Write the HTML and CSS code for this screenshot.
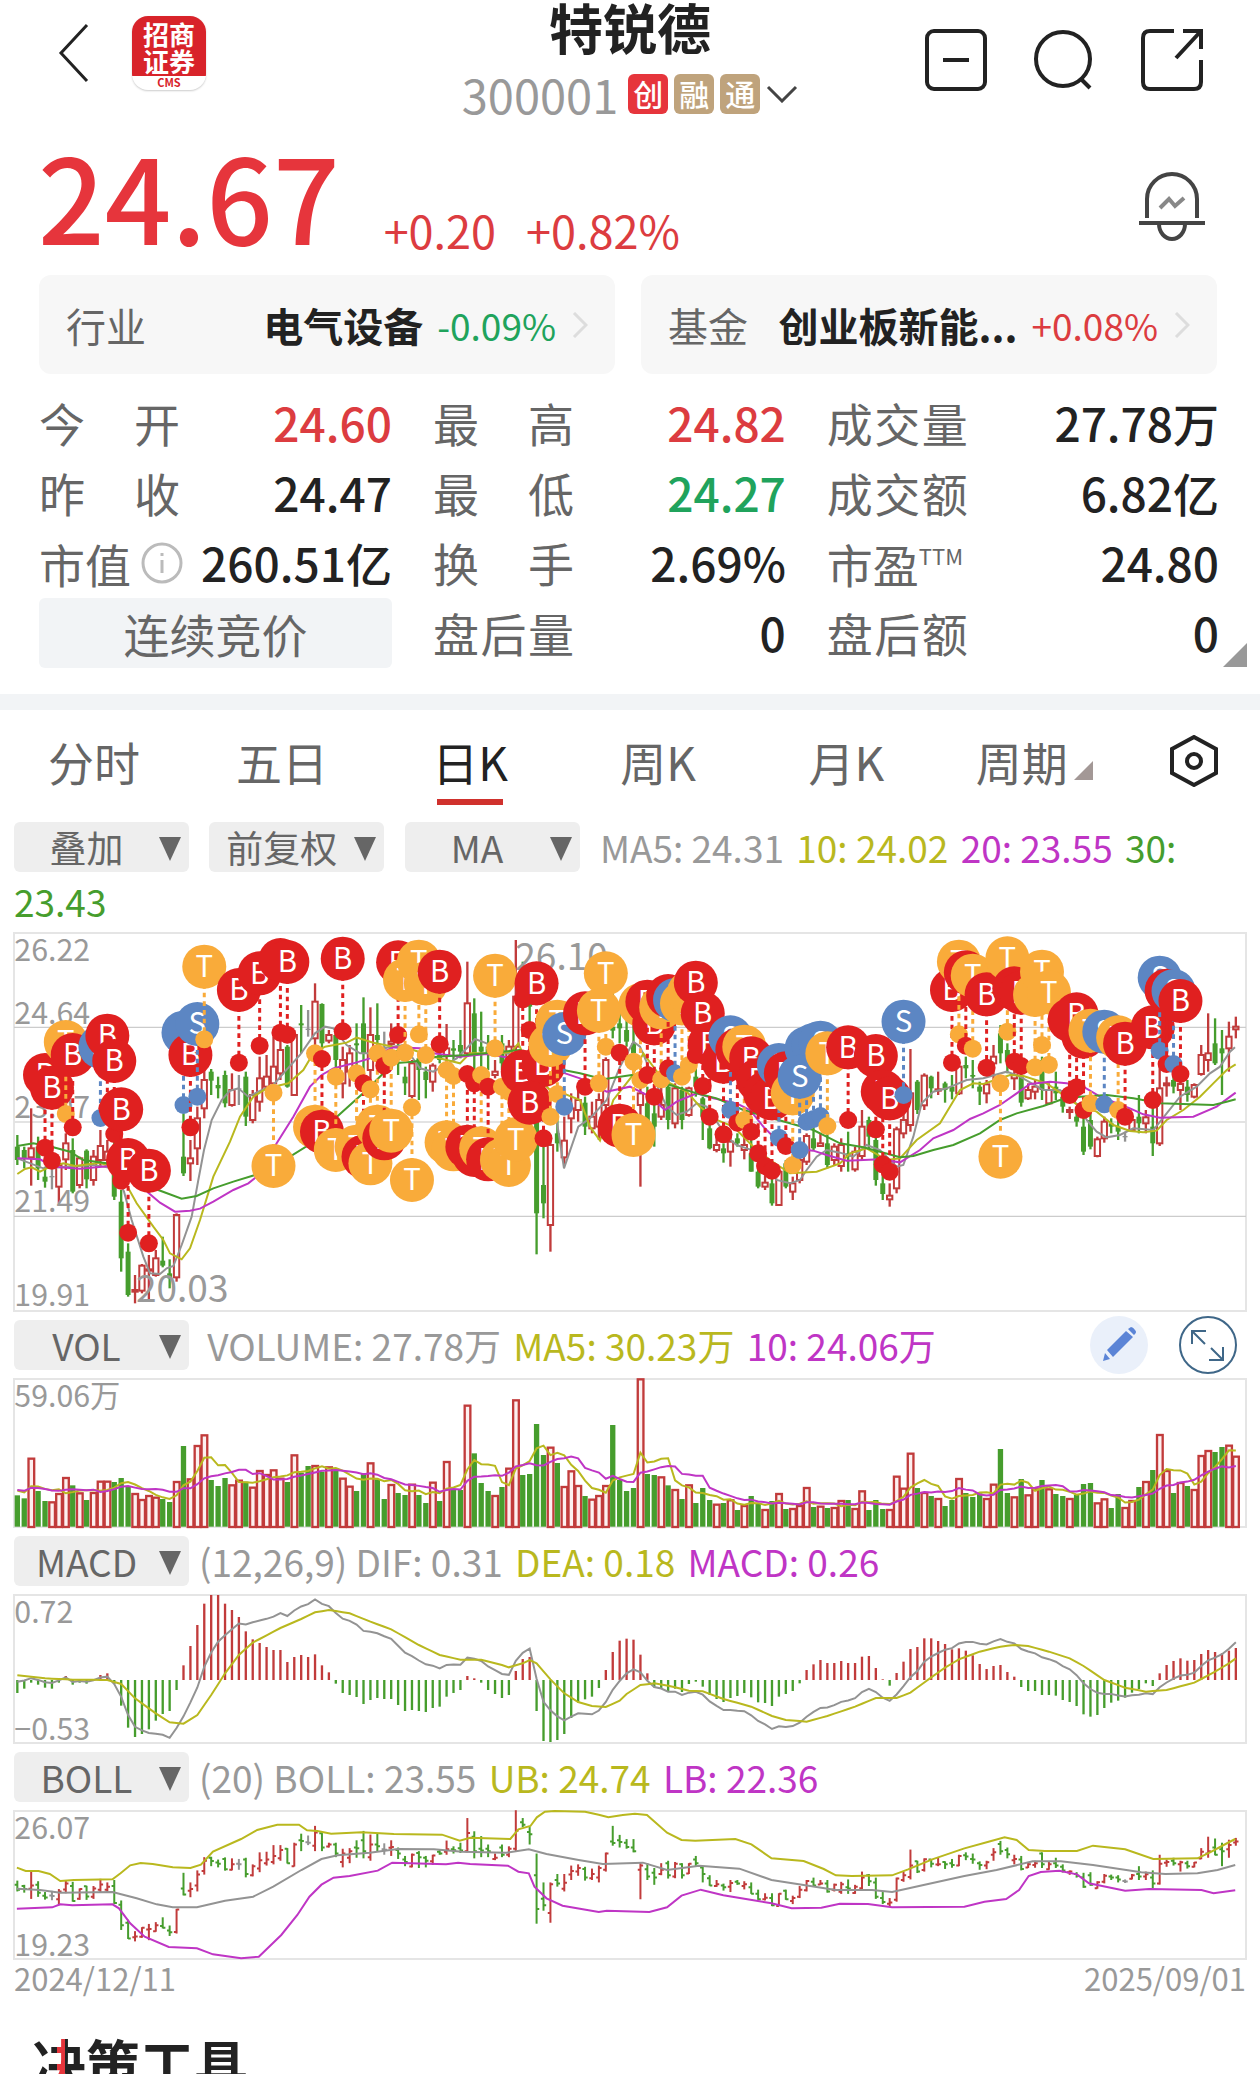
FILE: index.html
```html
<!DOCTYPE html>
<html lang="zh-CN">
<head>
    <meta charset="UTF-8">
    <meta name="viewport" content="width=device-width, initial-scale=1.0">
    <title>特锐德 300001</title>
    <link rel="stylesheet" href="styles.css">
</head>
<body>
    <header class="topbar">
        <div class="topbar-left">
            <a class="back" href="#" aria-label="返回">
                <svg width="32" height="60" viewBox="0 0 32 60"><path d="M29 2L3 30L29 58"/></svg>
            </a>
            <div class="logo">
                <div class="logo-name">招商<br>证券</div>
                <div class="logo-code">CMS</div>
            </div>
        </div>
        <div class="stock">
            <h1>特锐德</h1>
            <div class="stock-code">
                <span>300001</span>
                <span class="badge badge-red">创</span>
                <span class="badge">融</span>
                <span class="badge">通</span>
                <svg class="stock-arrow" width="32" height="18" viewBox="0 0 32 18"><path d="M2 2L16 16L30 2"/></svg>
            </div>
        </div>
        <div class="topbar-right">
            <button aria-label="删自选">
                <svg width="62" height="62" viewBox="0 0 62 62"><rect x="2" y="2" width="58" height="58" rx="7"/><path d="M18 31H44"/></svg>
            </button>
            <button aria-label="搜索">
                <svg width="62" height="62" viewBox="0 0 62 62"><circle cx="30" cy="30" r="27"/><path d="M48 50L57 59"/></svg>
            </button>
            <button aria-label="分享">
                <svg width="62" height="62" viewBox="0 0 62 62"><path d="M33 2H9Q2 2 2 9V53Q2 60 9 60H53Q60 60 60 53V31M42 2H60V20M60 2L35 29"/></svg>
            </button>
        </div>
    </header>

    <section class="price">
        <strong class="price-now">24.67</strong>
        <span class="price-diff">+0.20</span>
        <span class="price-diff">+0.82%</span>
        <button class="bell" aria-label="提醒">
            <svg width="68" height="70" viewBox="0 0 68 70">
                <path d="M9 46V27A25 25 0 0 1 59 27V46M1 51H67M21 52A13 15 0 0 0 47 52"/>
                <path class="bell-wave" d="M22 36L31 27L37 34L46 26"/>
            </svg>
        </button>
    </section>

    <section class="related">
        <a class="related-card" href="#">
            <span class="related-kind">行业</span>
            <b>电气设备</b>
            <span class="down">-0.09%</span>
            <svg width="16" height="26" viewBox="0 0 16 26"><path d="M2 1L14 13L2 25"/></svg>
        </a>
        <a class="related-card" href="#">
            <span class="related-kind">基金</span>
            <b>创业板新能...</b>
            <span class="up">+0.08%</span>
            <svg width="16" height="26" viewBox="0 0 16 26"><path d="M2 1L14 13L2 25"/></svg>
        </a>
    </section>

    <section class="quotes">
        <div class="quote"><span class="label">今开</span><span class="up">24.60</span></div>
        <div class="quote"><span class="label">最高</span><span class="up">24.82</span></div>
        <div class="quote"><span class="label">成交量</span><span>27.78万</span></div>
        <div class="quote"><span class="label">昨收</span><span>24.47</span></div>
        <div class="quote"><span class="label">最低</span><span class="down">24.27</span></div>
        <div class="quote"><span class="label">成交额</span><span>6.82亿</span></div>
        <div class="quote">
            <span class="label-short">市值<svg class="info" width="42" height="42" viewBox="0 0 42 42"><circle cx="21" cy="21" r="19"/><path d="M21 18V31M21 11V14"/></svg></span>
            <span>260.51亿</span>
        </div>
        <div class="quote"><span class="label">换手</span><span>2.69%</span></div>
        <div class="quote"><span class="label-short">市盈<sup>TTM</sup></span><span>24.80</span></div>
        <button class="phase">连续竞价</button>
        <div class="quote"><span class="label">盘后量</span><span>0</span></div>
        <div class="quote"><span class="label">盘后额</span><span>0</span></div>
        <i class="quotes-more"></i>
    </section>

    <nav class="tabs">
        <button>分时</button>
        <button>五日</button>
        <button class="active">日K</button>
        <button>周K</button>
        <button>月K</button>
        <button>周期<i class="corner"></i></button>
        <button aria-label="设置">
            <svg width="48" height="52" viewBox="0 0 48 52"><path d="M24 2L46 14V38L24 50L2 38V14Z"/><circle cx="24" cy="26" r="7"/></svg>
        </button>
    </nav>

    <main class="charts">
        <div class="legend legend-wrap">
            <span class="pick"><select aria-label="叠加"><option>叠加</option></select></span>
            <span class="pick"><select aria-label="复权"><option>前复权</option></select></span>
            <span class="pick"><select aria-label="主图指标"><option>MA</option></select></span>
            <span class="c-gray">MA5: 24.31</span>
            <span class="c-yellow">10: 24.02</span>
            <span class="c-purple">20: 23.55</span>
            <span class="c-green">30: 23.43</span>
        </div>
        <svg id="kline" class="panel" viewBox="42 39 3696 1134"></svg>

        <div class="legend">
            <span class="pick"><select aria-label="副图一"><option>VOL</option></select></span>
            <p>
                <span class="c-gray">&nbsp;VOLUME: 27.78万</span>
                <span class="c-yellow">MA5: 30.23万</span>
                <span class="c-purple">10: 24.06万</span>
            </p>
            <div class="chart-btns">
                <button class="draw" aria-label="画线">
                    <svg width="58" height="58" viewBox="0 0 58 58"><path d="M13 45L15 37L20 43ZM17 34L36 15L43 21L23 41ZM38 13L41 11Q43 11 45 14Q47 16 45 18L44 19Z"/></svg>
                </button>
                <button class="full" aria-label="全屏">
                    <svg width="58" height="58" viewBox="0 0 58 58"><circle cx="29" cy="29" r="28"/><path d="M13 28V15H27M14 16L26 28M44 31V44H30M43 43L32 32"/></svg>
                </button>
            </div>
        </div>
        <svg id="vol" class="panel" viewBox="42 207 3696 444"></svg>

        <div class="legend">
            <span class="pick"><select aria-label="副图二"><option>MACD</option></select></span>
            <p>
                <span class="c-gray">(12,26,9) DIF: 0.31</span>
                <span class="c-yellow">DEA: 0.18</span>
                <span class="c-purple">MACD: 0.26</span>
            </p>
        </div>
        <svg id="macd" class="panel" viewBox="42 195 3696 444"></svg>

        <div class="legend">
            <span class="pick"><select aria-label="副图三"><option>BOLL</option></select></span>
            <p>
                <span class="c-gray">(20) BOLL: 23.55</span>
                <span class="c-yellow">UB: 24.74</span>
                <span class="c-purple">LB: 22.36</span>
            </p>
        </div>
        <svg id="boll" class="panel" viewBox="42 63 3696 444"></svg>

        <div class="dates"><span>2024/12/11</span><span>2025/09/01</span></div>
    </main>

    <section class="tools">
        <h2>决策工具</h2>
    </section>

    <script src="charts.js"></script>
</body>
</html>
```
FILE: styles.css
```css
* {
    box-sizing: border-box;
}
body {
    margin: 0;
    background: #fff;
    color: #222;
    font-family: "Noto Sans CJK SC", sans-serif;
}
h1, h2, p {
    margin: 0;
}
button {
    border: 0;
    padding: 0;
    background: none;
    font: inherit;
    color: inherit;
}
a {
    color: inherit;
    text-decoration: none;
}
svg {
    display: block;
    fill: none;
    stroke: #222;
    stroke-width: 4;
}
.up {
    color: #dc3c40;
}
.down {
    color: #20a35c;
}

/* top bar */
.topbar {
    display: grid;
    grid-template-columns: 1fr auto 1fr;
    height: 128px;
}
.topbar-left {
    display: flex;
    align-items: center;
    gap: 42px;
    height: 106px;
    padding-left: 58px;
}
.back svg {
    stroke-width: 3;
}
.logo {
    width: 74px;
    height: 74px;
    border-radius: 16px;
    overflow: hidden;
    background: #fff;
    box-shadow: 0 1px 2px #ccc;
    text-align: center;
    color: #d8232a;
}
.logo-name {
    height: 60px;
    padding-top: 4px;
    background: #d8232a;
    color: #fff;
    font-size: 26px;
    line-height: 27px;
    font-weight: bold;
}
.logo-code {
    font-size: 11px;
    line-height: 13px;
    font-weight: bold;
}
.stock {
    text-align: center;
}
.stock h1 {
    font-size: 54px;
    line-height: 54px;
}
.stock-code {
    display: flex;
    align-items: center;
    justify-content: center;
    gap: 6px;
    height: 80px;
    font-size: 47px;
    line-height: 74px;
    color: #999;
}
.badge {
    width: 40px;
    height: 40px;
    border-radius: 6px;
    background: #bfa37c;
    color: #fff;
    font-size: 30px;
    line-height: 38px;
    font-weight: 500;
}
.badge-red {
    background: #e6353c;
    margin-left: 4px;
}
.stock-arrow {
    stroke: #444;
    stroke-width: 3;
}
.topbar-right {
    display: flex;
    justify-content: flex-end;
    gap: 46px;
    padding: 29px 57px 0 0;
}
.topbar-right button {
    height: 62px;
}

/* price */
.price {
    display: flex;
    align-items: flex-end;
    gap: 30px;
    padding: 0 54px 15px 38px;
}
.price-now {
    margin-right: 14px;
    font-size: 117px;
    line-height: 132px;
    font-weight: 500;
    color: #e6353c;
}
.price-diff {
    font-size: 45px;
    line-height: 60px;
    color: #dc3c40;
}
.bell {
    margin: 0 0 18px auto;
}
.bell svg {
    stroke: #444;
}
.bell .bell-wave {
    stroke: #888;
}

.related {
    display: grid;
    grid-template-columns: 1fr 1fr;
    gap: 26px;
    padding: 0 43px 14px 39px;
}
.related-card {
    display: flex;
    align-items: center;
    height: 99px;
    padding: 0 27px;
    border-radius: 12px;
    background: #f7f7f7;
    font-size: 40px;
    white-space: nowrap;
}
.related-kind {
    margin-right: auto;
    color: #666;
}
.related-card .up,
.related-card .down {
    margin: 0 16px 0 14px;
    font-size: 37px;
}
.related-card svg {
    stroke: #ddd;
    stroke-width: 3;
}

/* quote table */
.quotes {
    position: relative;
    display: grid;
    grid-template-columns: 9fr 9fr 10fr;
    grid-auto-rows: 70px;
    column-gap: 41px;
    padding: 0 41px 26px 39px;
    border-bottom: 16px solid #f2f4f6;
    font-size: 46px;
    line-height: 68px;
}
.quote {
    display: flex;
    justify-content: space-between;
    white-space: nowrap;
    font-weight: 500;
}
.label {
    width: 141px;
    text-align-last: justify;
    color: #666;
    font-weight: 400;
}
.label-short {
    display: flex;
    align-items: center;
    color: #666;
    font-weight: 400;
}
.label-short sup {
    align-self: flex-start;
    font-size: 22px;
    line-height: 54px;
}
.info {
    margin-left: 10px;
    stroke: #bbb;
    stroke-width: 3;
}
.phase {
    border-radius: 6px;
    background: #f2f4f6;
    color: #666;
}
.quotes-more {
    position: absolute;
    right: 13px;
    bottom: 27px;
    border-left: 24px solid transparent;
    border-bottom: 24px solid #999;
}

/* period tabs */
.tabs {
    display: grid;
    grid-template-columns: repeat(6, 10fr) 7fr;
    height: 95px;
    font-size: 46px;
    color: #666;
}
.tabs button {
    position: relative;
    display: flex;
    justify-content: center;
    align-items: center;
    height: 102px;
}
.tabs .active {
    color: #222;
}
.tabs .active::after {
    content: "";
    position: absolute;
    bottom: 7px;
    width: 66px;
    height: 6px;
    background: #d0312d;
}
.corner {
    margin: 18px 0 0 6px;
    border-left: 19px solid transparent;
    border-bottom: 19px solid #a39896;
}

/* charts */
.charts {
    padding: 15px 14px 0;
}
.legend {
    display: flex;
    align-items: center;
    gap: 10px;
    height: 68px;
    font-size: 37px;
    line-height: 50px;
    white-space: nowrap;
}
.legend-wrap {
    display: block;
    height: auto;
    padding-bottom: 5px;
    line-height: 54px;
    white-space: normal;
}
.legend p span,
.legend-wrap > span {
    margin-right: 4px;
}
.pick {
    position: relative;
    display: inline-block;
    width: 175px;
    height: 50px;
    vertical-align: top;
}
.legend-wrap > .pick {
    margin: 2px 12px 2px 0;
}
.pick::after {
    content: "";
    position: absolute;
    right: 8px;
    top: 15px;
    border: 11px solid transparent;
    border-top: 24px solid #666;
    border-bottom: 0;
    pointer-events: none;
}
.pick select {
    appearance: none;
    display: block;
    width: 100%;
    height: 50px;
    padding: 0 30px 0 0;
    border: 0;
    border-radius: 6px;
    background: #eee;
    color: #666;
    font: inherit;
    line-height: 50px;
    text-align: center;
    text-align-last: center;
}
.c-gray {
    color: #999;
}
.c-yellow {
    color: #b9b81e;
}
.c-purple {
    color: #bf35c5;
}
.c-green {
    color: #469d2d;
}
.chart-btns {
    display: flex;
    gap: 31px;
    margin: 0 9px 0 auto;
}
.draw {
    border-radius: 50%;
    background: #eaf0fa;
}
.draw svg {
    fill: #5b84d6;
    stroke: none;
}
.full svg {
    stroke: #3f6788;
    stroke-width: 2;
}
.panel {
    width: 100%;
    height: auto;
    overflow: visible;
}
.panel text {
    stroke: none;
    fill: #999;
    font-size: 91px;
}
.panel .peak {
    font-size: 111px;
}
.panel .mark {
    fill: #fff;
    font-size: 88px;
    text-anchor: middle;
}
.frame {
    stroke: #e5e5e5;
    stroke-width: 6;
}
.dates {
    display: flex;
    justify-content: space-between;
    font-size: 31px;
    line-height: 38px;
    color: #999;
}

.tools {
    height: 77px;
    padding: 33px 32px 0;
    overflow: hidden;
}
.tools h2 {
    font-size: 54px;
    line-height: 66px;
    color: transparent;
    background: linear-gradient(90deg, #222 25px, #e6353c 25px, #e6353c 33px, #222 33px);
    -webkit-background-clip: text;
    background-clip: text;
}
```
FILE: charts.js
```js
var RED = "#c13b3b", GREEN = "#469d2d", GRAY = "#939393", YELLOW = "#b9b81e", PURPLE = "#bf35c5"
var MARK = {B: "#e02020", T: "#f9ab3a", S: "#5c86c3"}
var COLORS = {r: RED, g: GREEN, x: GRAY}

// one entry per day: colour, high, body top, body bottom, low
var candles = `g 645 680 720 735,g 680 690 715 745,r 565 685 712 797,g 650 680 745 780,g 740 770 785 803,x 730 768 772 808,r 715 735 800 850,r 640 670 718 750,g 655 690 815 820,r 710 715 795 805
g 688 692 778 805,r 690 710 780 797,r 630 678 720 740,r 660 695 720 740,g 640 690 830 840,g 810 845 1015 1055,g 970 995 1125 1130,r 1065 1110 1115 1150,r 1032 1037 1112 1120,r 1005 1048 1052 1140
r 990 1015 1065 1070,g 950 1022 1037 1042,g 1018 1060 1075 1105,r 880 885 1072 1085,g 580 710 760 768,r 660 715 730 783,r 560 595 685 735,r 450 480 565 595,g 447 455 482 525,g 470 495 505 535
g 452 465 550 562,r 460 510 555 560,x 465 505 508 555,g 455 470 590 618,r 510 525 600 610,r 410 475 545 575,r 405 470 500 520,r 350 440 490 510,r 350 390 460 480,g 375 380 500 503
r 330 345 525 528,g 255 310 316 400,x 270 326 330 350,r 190 245 355 400,g 250 252 370 400,r 330 345 362 370,g 330 345 420 450,r 380 420 490 535,r 375 400 455 500,g 310 370 376 455
g 232 310 400 460,r 262 345 450 480,g 250 345 360 400,x 335 385 388 430,r 310 365 372 440,g 370 390 420 465,g 440 470 490 525,r 420 430 528 535,g 400 415 450 540,g 440 455 480 535
r 430 437 485 515,g 390 405 420 430,r 312 385 405 430,g 360 385 392 420,g 330 375 395 415,r 125 250 400 410,g 235 280 400 460,g 275 380 395 450,g 345 380 400 450,r 420 455 465 475
g 345 370 430 450,r 360 380 430 450,r 60 230 380 400,g 125 160 180 200,g 200 240 260 345,g 420 600 880 1003,g 660 795 850 895,r 660 675 915 995,g 590 640 670 695,r 590 662 712 735
r 520 565 595 640,r 510 540 570 605,g 530 548 620 645,r 545 590 625 640,r 520 540 620 660,r 412 420 555 570,g 190 320 332 355,g 265 310 325 370,g 300 330 365 380,g 300 370 400 410
r 500 520 555 800,g 500 550 610 640,g 540 580 620 680,r 500 555 590 600,g 480 500 600 628,r 490 505 610 625,g 500 510 600 628,r 500 505 585 590,g 440 470 500 530,g 530 535 590 660
g 600 625 685 688,r 640 675 690 697,g 670 685 700 728,r 640 665 695 740,g 640 655 670 680,r 650 675 690 718,g 660 700 755 755,g 720 755 800 805,r 750 788 800 810,g 750 790 850 857
r 750 755 855 857,g 720 730 800 805,r 770 790 815 840,r 690 720 780 790,r 640 648 725 735,g 620 655 685 690,r 640 670 678 680,g 640 670 735 745,r 670 680 720 735,r 655 675 738 755
g 635 700 710 755,r 680 695 748 755,r 570 620 708 720,g 590 600 650 690,g 620 660 780 797,g 740 790 822 840,r 790 827 838 860,r 620 628 805 820,r 570 600 640 655,r 387 520 615 635
g 480 485 570 582,r 460 467 556 570,g 467 470 505 535,r 455 508 512 525,g 485 490 510 548,g 465 500 515 538,r 430 440 520 525,g 410 435 445 475,g 420 465 470 505,g 485 500 515 555
r 480 493 520 550,r 375 410 430 480,g 315 340 400 430,g 370 390 425 460,r 430 465 475 510,g 440 470 548 560,r 490 510 535 540,r 480 500 515 538,g 410 420 510 540,r 490 510 550 555
g 455 500 520 540,g 510 530 560 578,r 560 570 576 597,g 575 590 605 620,g 580 620 695 705,g 575 600 680 688,r 650 658 708 712,r 590 605 655 668,g 595 610 620 640,g 600 620 635 660
x 635 648 652 665,r 590 600 630 635,g 525 590 610 640,r 570 592 610 640,g 560 620 670 708,r 430 505 670 678,r 470 490 496 530,g 455 480 500 520,r 480 492 510 570,g 480 500 525 545
r 490 495 530 535,r 375 405 462 467,r 280 400 420 455,g 295 370 430 435,g 330 385 400 525,r 305 350 385 455,r 290 320 328 355`.split(/[,\n]/).map((row) => {
    var c = row.split(" ")
    return {color: COLORS[c[0]], high: +c[1], top: +c[2], bottom: +c[3], low: +c[4]}
})

// top edge of each volume bar, the floor is 650
var volumes = `g556 g565 r446 g543 g573 r577 r552 r504 g526 r550 g570 r549 r515 r515 g516 g504 g531 r552 r570 r558 r563 g567 g576 r516 g408 r508 r408 r376 g510 g528
g504 r526 r512 g515 r533 r483 r495 r481 r506 g516 r436 g488 g468 r468 g485 r472 g478 r506 r530 g543 g490 r460 g508 g567 r525 g549 g555 r524 g555 g579
r518 g573 r456 g537 g540 r287 g430 g519 g543 r558 g531 r476 r271 g495 g492 g342 g435 r413 g459 r531 r484 r528 g558 r569 r558 r528 g345 g510 g543
g534 r208 g492 g495 r502 g526 r540 g567 r526 g579 g534 g570 r584 g579 r571 g600 r588 g558 g580 r600 g573 r552 g597 r597 r588 r534 g591 r590 g594 r594
r573 g570 r597 r544 g600 g570 g597 r600 r500 r536 r431 g534 r549 g558 r567 g588 g570 r507 g549 g561 g550 r567 r524 g417 g549 r562 g507 r556 r538 g510
r538 g552 g558 r567 g555 g522 g519 r580 r568 g594 g552 r594 r573 g531 r516 g480 r375 r483 g549 r519 g528 r540 r438 r423 g426 g411 r407 r440`.split(/\s+/)

var macd = [-39,-26,-8,-14,-23,-26,-8,12,-14,-8,-11,-2,15,20,-12,-77,-143,-171,-162,-148,-122,-102,-93,-30,44,102,165,229,255,255,
    229,210,189,146,122,111,99,90,90,54,69,75,69,77,44,23,-11,-39,-45,-51,-72,-60,-54,-57,-57,-75,-93,-90,-93,-96,
    -84,-80,-50,-39,-30,12,5,-8,-30,-42,-54,-45,27,63,69,-93,-183,-186,-180,-162,-114,-68,-58,-50,-24,30,84,118,124,
    121,76,20,-22,-24,-36,-26,-36,-12,-5,-20,-45,-57,-66,-54,-48,-39,-52,-67,-69,-78,-50,-42,-33,-10,30,47,60,51,51,
    57,51,51,70,72,36,2,-17,21,55,93,99,125,125,117,108,92,95,88,74,48,33,42,45,24,10,-21,-33,-33,-45,
    -45,-47,-60,-66,-78,-103,-110,-105,-84,-68,-62,-53,-38,-27,-10,-18,20,45,57,65,58,60,78,90,84,80,88,96]
// day, value; the days between are interpolated
var dea = [[0,14],[4,5],[8,1],[13,0],[15,-12],[17,-55],[20,-100],[22,-127],[24,-131],[26,-105],[28,-45],[30,20],[32,75],[34,112],[38,156],[41,183],[43,203],[45,210],[48,200],[51,175],[54,152],[58,105],[61,75],[64,61],[67,61],[70,45],[71,38],[73,50],[74,60],[75,50],[77,2],[79,-40],[81,-66],[83,-78],[85,-81],[87,-62],[88,-42],[90,-15],[92,-10],[94,-17],[97,-32],[99,-34],[102,-57],[106,-80],[109,-108],[111,-120],[114,-125],[117,-108],[121,-80],[124,-54],[127,-54],[129,-38],[132,8],[134,37],[136,62],[139,85],[142,100],[144,105],[146,102],[149,85],[152,65],[154,42],[157,0],[160,-23],[163,-35],[166,-30],[170,-8],[173,25],[175,50],[176,65]]

var ma5 = "52,715 130,745 200,740 280,735 340,745 372,815 395,900 430,1010 450,1060 480,1062 500,1045 520,1038 545,975 575,890 595,780 612,690 635,600 665,540 690,512 715,505 745,530 775,515 820,495 850,460 900,405 945,340 975,320 1000,325 1040,375 1080,400 1110,400 1150,385 1210,375 1260,445 1300,455 1370,415 1400,385 1425,357 1460,370 1500,395 1560,410 1620,600 1670,600 1692,745 1735,620 1770,595 1820,540 1860,440 1900,365 1920,380 1950,450 2000,560 2030,585 2060,575 2090,550 2120,560 2180,650 2210,675 2240,685 2290,700 2330,780 2370,790 2400,780 2420,750 2450,710 2480,690 2520,698 2560,710 2600,675 2640,690 2690,740 2710,735 2740,650 2765,550 2800,515 2840,505 2900,480 2950,475 3020,455 3060,470 3130,510 3180,510 3240,560 3260,600 3290,635 3320,652 3360,645 3400,625 3460,630 3500,580 3540,530 3590,500 3630,460 3660,440 3690,395 3705,382"
var ma10 = "52,762 75,747 95,742 120,755 150,740 190,730 225,738 300,728 350,750 385,805 410,850 460,920 490,960 510,1000 545,1018 570,985 600,900 640,770 690,665 720,590 760,530 800,505 865,490 910,450 940,400 975,380 1040,368 1070,353 1120,368 1180,380 1240,390 1300,410 1380,430 1410,400 1500,400 1535,395 1555,370 1590,450 1650,510 1690,520 1740,540 1770,620 1800,662 1840,540 1895,470 1930,400 1990,480 2060,515 2100,560 2150,600 2200,620 2260,680 2310,720 2370,760 2450,755 2520,730 2550,700 2600,685 2660,720 2700,715 2750,660 2820,610 2880,510 2920,490 2950,492 3030,465 3070,468 3140,490 3240,560 3290,575 3340,615 3390,633 3430,637 3470,632 3500,600 3550,570 3600,530 3640,490 3680,450 3707,433"
var ma20 = "52,715 120,718 160,740 240,746 330,738 400,770 445,818 480,848 525,875 570,872 600,866 640,845 700,810 745,790 770,770 830,670 880,590 930,500 965,465 1000,445 1060,430 1110,415 1180,382 1260,385 1300,400 1380,410 1460,402 1510,410 1600,420 1680,455 1740,475 1820,515 1890,500 1950,530 1995,570 2030,545 2090,520 2140,535 2210,550 2250,570 2290,620 2320,650 2370,685 2440,692 2480,705 2540,722 2640,718 2700,727 2760,690 2800,655 2860,630 2910,597 2950,580 3000,555 3050,520 3090,492 3150,485 3200,490 3250,500 3300,530 3390,565 3430,583 3480,593 3580,590 3650,560 3707,518"
var ma30 = "52,678 100,670 160,682 210,695 250,720 320,730 400,765 475,810 545,836 590,828 640,805 700,785 765,765 870,710 950,660 1000,600 1100,510 1180,430 1240,425 1310,410 1400,405 1560,390 1620,420 1690,450 1740,460 1810,478 1895,465 1960,480 2010,495 2090,520 2150,535 2230,570 2300,590 2370,610 2440,630 2520,670 2590,682 2640,695 2700,712 2740,708 2800,690 2860,675 2940,640 3000,600 3050,580 3130,558 3180,540 3240,530 3320,525 3400,535 3480,550 3640,555 3680,545 3707,538"

// trade marks: type, day, badge y, dot y
var marks = `B 4 465 683,B 5 503 722,T 7 366 582,B 8 405 622,S 12 380 594,B 13 347 565,B 14 423 642,B 15 568 782,B 16 720 938,B 19 752 970
S 24 338 555,B 25 405 622,S 26 312 530,T 27 140 358,B 32 210 428,B 35 160 377,T 37 738 518,B 38 120 338,B 39 126 344,T 43 620 400
B 44 635 417,T 46 690 470,B 47 116 334,T 49 680 460,B 50 710 490,T 51 730 508,T 52 620 400,B 53 655 437,T 54 632 413,B 55 127 345
T 56 180 398,T 57 780 562,T 58 125 343,T 59 190 405,B 61 155 373,T 62 667 450,T 63 688 468,B 65 680 462,B 66 705 490,T 67 685 465
B 68 718 500,T 69 167 385,T 70 720 500,T 71 735 515,T 72 658 440,B 73 455 238,B 75 190 405,B 76 435 655,B 74 548 330,T 78 305 522
T 77 375 590,S 79 342 560,B 82 280 500,T 85 160 380,T 84 272 490,B 87 617 398,T 90 255 480,T 89 645 425,B 92 310 530,B 91 245 465
T 93 262 478,B 94 228 445,S 95 240 460,T 96 250 470,T 97 218 435,B 98 188 405,B 99 280 498,B 100 372 590,B 102 425 643,S 103 352 570
B 104 390 608,T 105 380 600,B 106 415 635,B 107 480 700,B 108 520 738,B 109 535 752,S 110 435 653,B 111 460 678,T 112 520 735,S 114 385 605
S 115 375 597,S 116 368 588,S 113 470 690,T 117 400 618,B 120 382 600,B 124 408 628,B 125 515 733,B 126 535 755,S 128 305 525,B 135 210 428
T 136 125 343,B 137 157 377,T 138 167 386,B 140 223 443,T 142 710 490,T 143 115 335,B 144 205 425,B 145 218 438,T 147 225 442,T 148 155 375
T 149 217 434,B 152 300 525,B 154 350 570,B 153 283 502,T 155 332 550,S 157 335 553,T 159 352 570,B 160 371 590,B 164 322 540,S 165 173 392
B 166 212 432,S 167 213 432,B 168 243 462`.split(/[,\n]/)

var bollUp = "21,233 32,243 48,243 62,252 75,273 92,270 140,268 150,250 162,226 175,219 190,222 215,232 237,234 250,224 265,185 300,147 320,120 345,104 372,104 382,121 395,123 412,131 450,127 490,132 550,134 572,152 585,143 635,147 645,118 660,108 668,82 678,65 690,63 728,65 745,74 757,82 775,75 790,71 805,75 830,128 848,150 865,152 915,147 935,163 960,205 1000,213 1025,237 1040,256 1060,258 1110,256 1130,238 1160,208 1200,175 1230,155 1250,142 1265,150 1280,180 1300,183 1340,183 1360,167 1400,178 1435,207 1490,205 1505,188 1525,162 1537,147"
var bollMid = "21,296 50,300 75,308 140,306 170,325 195,343 215,352 245,352 280,332 315,320 340,290 375,240 400,207 420,196 460,188 495,177 540,178 575,185 630,188 658,178 680,192 720,210 750,222 800,218 830,240 870,227 920,236 960,270 1000,285 1040,300 1085,300 1110,306 1145,287 1200,258 1240,240 1285,214 1320,214 1360,225 1420,247 1450,252 1490,250 1515,240 1537,225"
var bollLow = "21,356 65,352 75,343 90,346 140,343 148,355 162,400 180,440 210,471 245,475 265,493 300,505 322,500 350,435 370,375 385,320 400,284 415,263 435,258 470,242 488,218 555,223 570,218 585,222 632,227 645,245 658,250 665,290 680,325 700,347 745,366 755,362 808,366 830,352 848,317 872,299 900,316 930,328 960,340 985,355 1022,353 1045,341 1080,342 1110,352 1200,350 1225,335 1252,327 1268,300 1280,258 1295,246 1318,242 1340,253 1355,280 1400,302 1430,297 1495,300 1510,310 1537,301"

function dayX(i) {
    return 52 + i * 20.77
}
function line(points, color) {
    return '<polyline points="' + points + '" stroke="' + color + '" stroke-width="6"/>'
}
function vline(x, y1, y2, color, width) {
    return '<path d="M' + x + ' ' + y1 + 'V' + y2 + '" stroke="' + color + '" stroke-width="' + width + '"/>'
}
function label(x, y, text, cls) {
    return '<text x="' + x + '" y="' + y + '" class="' + (cls || "scale") + '">' + text + '</text>'
}
function frame(y, h) {
    return '<rect class="frame" x="42" y="' + y + '" width="3696" height="' + h + '"/>'
}

function drawKline() {
    var html = frame(39, 1134)
    html += '<path d="M42 322H3738M42 889H3738" stroke="#ccc"/><path d="M42 606H3738" stroke="#e3e3e3" stroke-width="6"/>'
    candles.forEach((c, i) => {
        var x = dayX(i)
        if (c.color == RED) {
            html += vline(x, c.high, c.top, RED, 7) + vline(x, c.bottom, c.low, RED, 7)
            html += '<rect x="' + (x - 8) + '" y="' + c.top + '" width="16" height="' + (c.bottom - c.top) + '" stroke="' + RED + '" stroke-width="6"/>'
        } else {
            html += vline(x, c.high, c.low, c.color, 7) + vline(x, c.top, c.bottom, c.color, 15)
        }
    })
    html += line(ma5, GRAY) + line(ma10, YELLOW) + line(ma20, PURPLE) + line(ma30, GREEN)
    html += label(43, 123, "26.22") + label(43, 311, "24.64") + label(43, 593, "23.07") + label(43, 876, "21.49") + label(43, 1158, "19.91")
    html += label(408, 1147, "20.03", "peak") + label(1546, 150, "26.10", "peak")
    marks.forEach((m) => {
        var p = m.split(" "), x = dayX(+p[1]), color = MARK[p[0]]
        html += '<path d="M' + x + ' ' + p[2] + 'V' + p[3] + '" stroke="' + color + '" stroke-width="9" stroke-dasharray="14 12"/>'
        html += '<circle cx="' + x + '" cy="' + p[3] + '" r="27" fill="' + color + '" stroke="none"/>'
        html += '<circle cx="' + x + '" cy="' + p[2] + '" r="66" fill="' + color + '" stroke="none"/>'
        html += label(x, +p[2] + 31, p[0], "mark")
    })
    document.getElementById("kline").innerHTML = html
}

function average(days) {
    var tops = volumes.map((v) => +v.slice(1))
    return tops.map((v, i) => {
        var sum = 0
        for (var k = 0; k < days; k++) sum += i - k < 0 ? 538 : tops[i - k]
        return dayX(i) + "," + sum / days
    }).join(" ")
}
function drawVol() {
    var html = frame(207, 444) + label(43, 292, "59.06万")
    volumes.forEach((v, i) => {
        var x = dayX(i), top = +v.slice(1)
        if (v[0] == "r") {
            html += '<rect x="' + (x - 8) + '" y="' + top + '" width="17" height="' + (651 - top) + '" fill="#fdf0f0" stroke="' + RED + '" stroke-width="7"/>'
        } else {
            html += vline(x, top, 650, GREEN, 16)
        }
    })
    html += line(average(5), YELLOW) + line(average(10), PURPLE)
    document.getElementById("vol").innerHTML = html
}

function deaAt(i) {
    for (var k = 1; k < dea.length; k++) {
        var a = dea[k - 1], b = dea[k]
        if (i <= b[0]) return a[1] + (b[1] - a[1]) * (i - a[0]) / (b[0] - a[0])
    }
}
function drawMacd() {
    var html = frame(195, 444) + label(43, 278, "0.72") + label(43, 630, "−0.53")
    var slow = [], fast = []
    macd.forEach((v, i) => {
        html += vline(dayX(i), 450, 450 - v, v > 0 ? RED : GREEN, 7)
        slow.push(dayX(i) + "," + (450 - deaAt(i)))
        fast.push(dayX(i) + "," + (450 - deaAt(i) - v / 2))
    })
    html += line(fast.join(" "), GRAY) + line(slow.join(" "), YELLOW)
    document.getElementById("macd").innerHTML = html
}

function widen(points) {
    return points.split(" ").map((p) => {
        var xy = p.split(",")
        return xy[0] * 2.411 + "," + xy[1]
    }).join(" ")
}
function drawBoll() {
    var html = frame(63, 444) + label(43, 148, "26.07") + label(43, 497, "19.23")
    var y = (v) => 39 + v * 0.361
    candles.forEach((c, i) => {
        var x = dayX(i), up = c.color == RED
        html += vline(x, y(c.high), y(c.low), c.color, 6)
        html += '<path d="M' + (x - 8) + ' ' + y(up ? c.bottom : c.top) + 'h8M' + x + ' ' + y(up ? c.top : c.bottom) + 'h8" stroke="' + c.color + '" stroke-width="6"/>'
    })
    html += line(widen(bollUp), YELLOW) + line(widen(bollMid), GRAY) + line(widen(bollLow), PURPLE)
    document.getElementById("boll").innerHTML = html
}

drawKline()
drawVol()
drawMacd()
drawBoll()
```
